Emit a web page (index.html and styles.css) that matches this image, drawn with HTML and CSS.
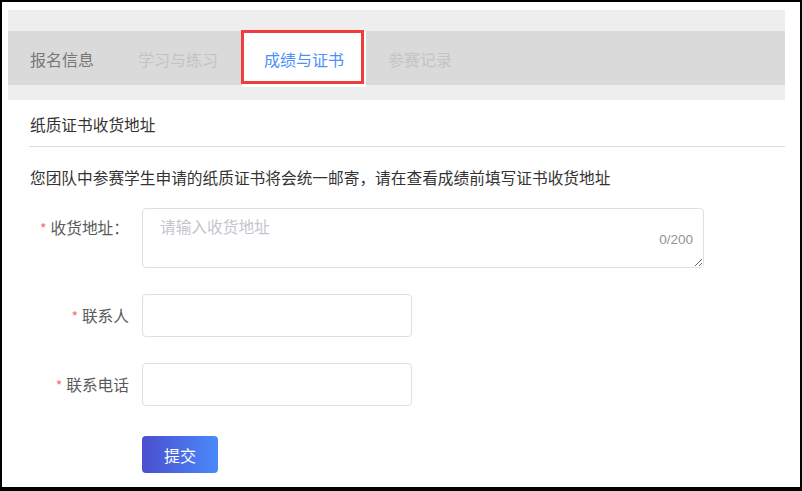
FILE: index.html
```html
<!DOCTYPE html>
<html lang="zh-CN">
<head>
    <meta charset="UTF-8">
    <meta name="viewport" content="width=device-width, initial-scale=1.0">
    <title>成绩与证书</title>
    <link rel="stylesheet" href="styles.css">
</head>
<body>
    <div class="page">
        <div class="tab-band">
            <div class="tabs">
                <div class="tab tab-normal">报名信息</div>
                <div class="tab tab-disabled">学习与练习</div>
                <div class="tab tab-active">成绩与证书</div>
                <div class="tab tab-disabled">参赛记录</div>
            </div>
        </div>

        <div class="content">
            <div class="section-title">纸质证书收货地址</div>
            <p class="notice">您团队中参赛学生申请的纸质证书将会统一邮寄，请在查看成绩前填写证书收货地址</p>

            <form class="form">
                <div class="form-item">
                    <label class="form-label" for="address"><span class="required">*</span>收货地址：</label>
                    <div class="textarea-wrap">
                        <textarea id="address" maxlength="200" placeholder="请输入收货地址"></textarea>
                        <span class="count">0/200</span>
                    </div>
                </div>

                <div class="form-item inline">
                    <label class="form-label" for="contact"><span class="required">*</span>联系人</label>
                    <input type="text" id="contact" class="text-input">
                </div>

                <div class="form-item inline">
                    <label class="form-label" for="phone"><span class="required">*</span>联系电话</label>
                    <input type="text" id="phone" class="text-input">
                </div>

                <div class="form-actions">
                    <button type="button" class="submit-btn">提交</button>
                </div>
            </form>
        </div>
    </div>
</body>
</html>
```

FILE: styles.css
```css
body {
    margin: 0;
    background-color: #000;
    font-family: "Noto Sans CJK SC", "Liberation Sans", sans-serif;
    font-size: 16px;
}
.page {
    margin: 2px 2px 4px 2px;
    height: 485px;
    background-color: #fff;
    overflow: hidden;
    padding: 8px 15px 0 6px;
    box-sizing: border-box;
}
.tab-band {
    background-color: #eeeeee;
    padding: 21px 0 15px;
}
.tabs {
    display: flex;
    height: 54px;
    background-color: #dadada;
}
.tab {
    padding: 0 22px;
    line-height: 56px;
    font-size: 16px;
}
.tab-normal {
    color: #777;
}
.tab-disabled {
    color: #c4c4c4;
}
.tab-active {
    position: relative;
    color: #4e8ff7;
    background-color: #fff;
    height: 56px;
    margin-left: 2px;
}
.tab-active::after {
    content: "";
    position: absolute;
    left: -1px;
    top: -1px;
    right: 2px;
    bottom: 3px;
    border: 3px solid #f23c3c;
}
.content {
    margin-left: 21px;
    font-size: 15.7px;
}
.section-title {
    color: #333;
    line-height: 22px;
    padding: 14px 0 10px 1px;
    border-bottom: 1px solid #dddddd;
}
.notice {
    margin: 20px 0 19px 1px;
    color: #333;
    line-height: 22px;
}
.form-item {
    display: flex;
    align-items: flex-start;
    margin-bottom: 26px;
}
.form-item.inline {
    align-items: center;
}
.form-label {
    width: 113px;
    padding-right: 13px;
    box-sizing: border-box;
    text-align: right;
    line-height: 40px;
    color: #5a5a5a;
    white-space: nowrap;
}
.required {
    color: #f56c6c;
    margin-right: 4px;
    font-size: 14px;
}
.textarea-wrap {
    position: relative;
}
textarea {
    display: block;
    width: 562px;
    height: 60px;
    padding: 8px 17px;
    border: 1px solid #dcdfe6;
    border-radius: 4px;
    box-sizing: border-box;
    font-family: inherit;
    font-size: 15.7px;
    line-height: 20px;
    color: #333;
}
textarea::placeholder {
    color: #c3c5cc;
}
.count {
    position: absolute;
    right: 11px;
    bottom: 21px;
    font-family: "Liberation Sans", sans-serif;
    font-size: 13.5px;
    color: #909399;
}
.text-input {
    width: 270px;
    height: 43px;
    padding: 0 15px;
    border: 1px solid #dcdfe6;
    border-radius: 4px;
    box-sizing: border-box;
    font-size: 16px;
}
.form-actions {
    padding-left: 113px;
    margin-top: 30px;
}
.submit-btn {
    width: 76px;
    height: 37px;
    border: none;
    border-radius: 4px;
    background: linear-gradient(to right, #4b4fcf, #4a89f9);
    color: #fff;
    font-family: inherit;
    font-size: 16px;
    cursor: pointer;
}
```
